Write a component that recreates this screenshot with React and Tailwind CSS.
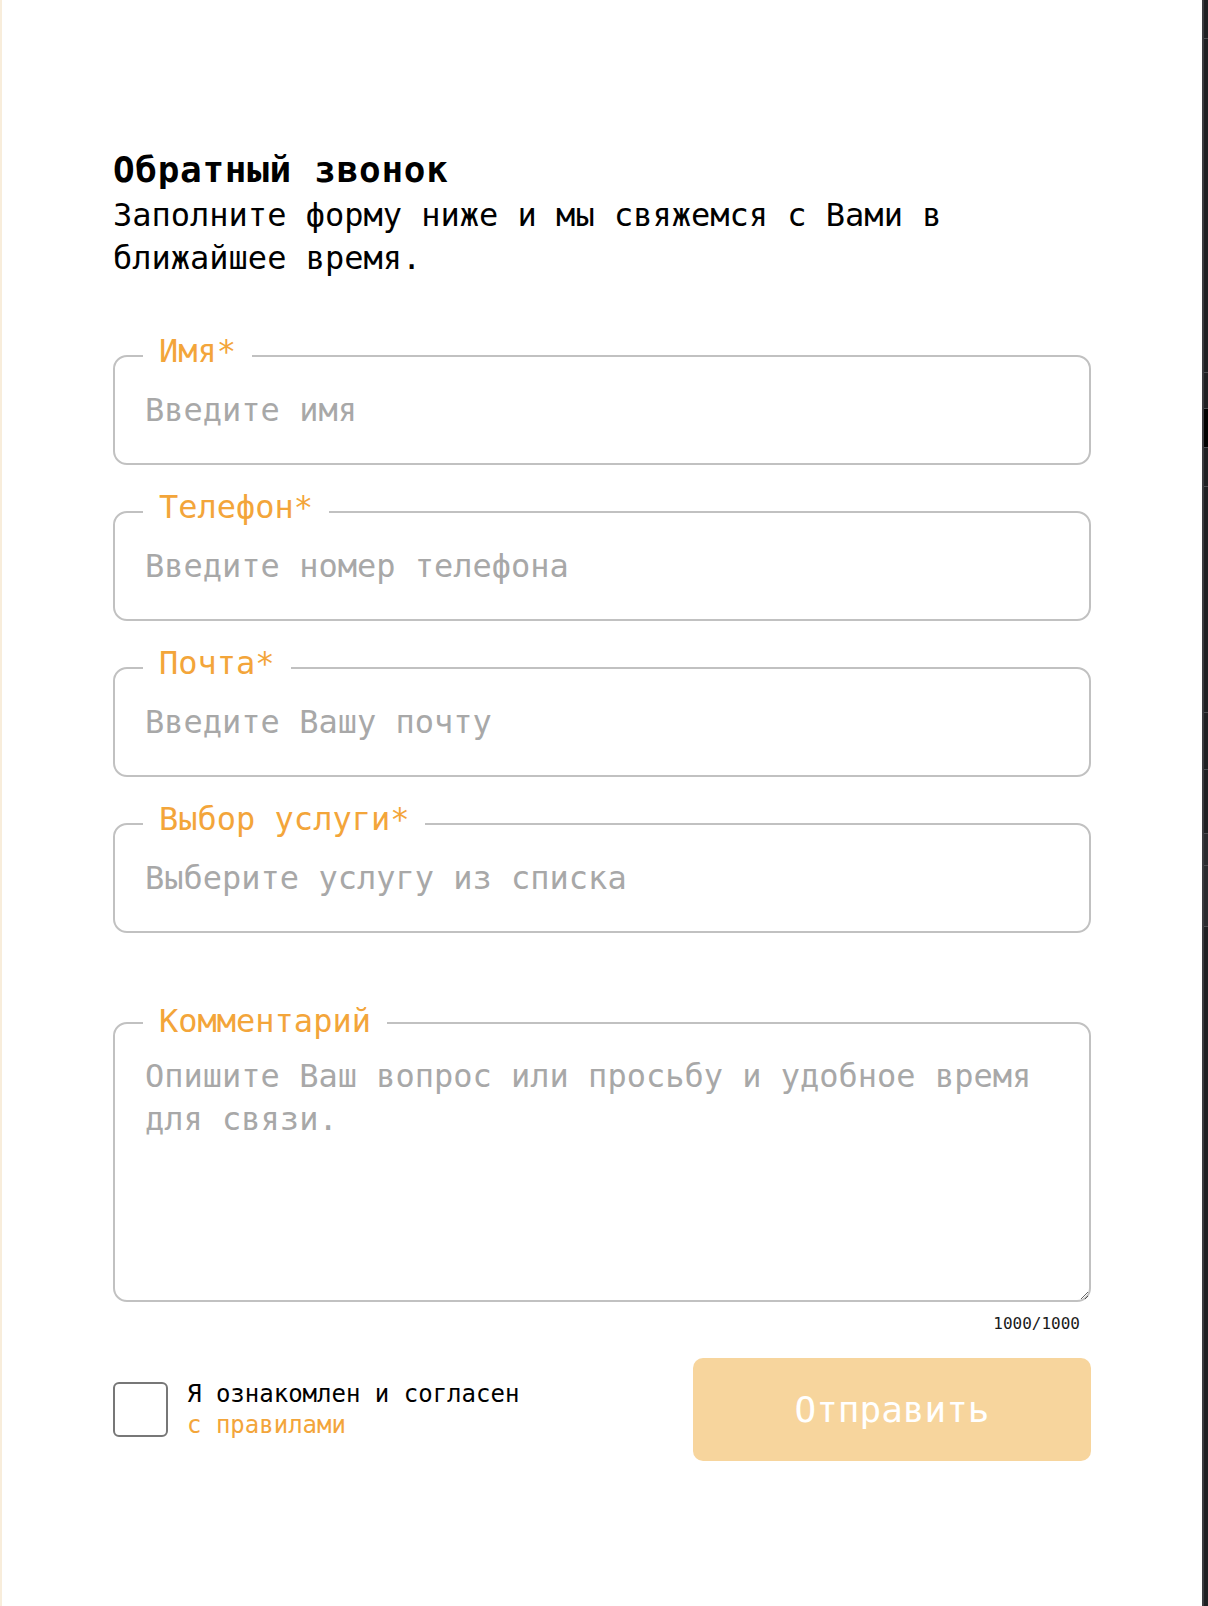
import React from "react";

const fields = [
  { label: "Имя*", ph: "Введите имя" },
  { label: "Телефон*", ph: "Введите номер телефона" },
  { label: "Почта*", ph: "Введите Вашу почту" },
  { label: "Выбор услуги*", ph: "Выберите услугу из списка" },
];

function RightStrip() {
  return (
    <div className="flex w-[6px] shrink-0 flex-col border-l-2 border-[#3b3c40] bg-[#1f2023]">
      <div className="h-[39px] border-b border-[#4a4b50]" />
      <div className="h-[334px] border-b border-[#4a4b50]" />
      <div className="h-[36px] border-b border-[#4a4b50]" />
      <div className="h-[38px] bg-black" />
      <div className="h-[40px] border-y border-[#4a4b50]" />
      <div className="h-[226px] border-b border-[#4a4b50]" />
      <div className="h-[57px] border-b border-[#4a4b50]" />
      <div className="h-[64px] border-b border-[#4a4b50]" />
      <div className="h-[32px] border-b border-[#4a4b50] bg-[#2a2b2f]" />
      <div className="h-[61px] border-b border-[#4a4b50] bg-[#2a2b2f]" />
      <div className="flex-1" />
    </div>
  );
}

export default function App() {
  return (
    <div className="flex min-h-[1606px] w-[1208px] bg-white font-['DejaVu_Sans_Mono',monospace]">
      <div className="w-[2px] shrink-0 bg-[#f8eddb]" />
      <main className="w-[1200px] shrink-0 bg-white px-[111px] pt-[148px]">
        <h1 className="text-[36px] font-bold leading-[44px] tracking-[0.7px] text-black">
          Обратный звонок
        </h1>
        <p className="mt-[2px] text-[32px] leading-[43px] text-black">
          Заполните форму ниже и мы свяжемся с Вами в ближайшее время.
        </p>

        <form className="mt-[75px] flex flex-col gap-[46px]">
          {fields.map((f) => (
            <div key={f.label} className="relative">
              <input
                type="text"
                placeholder={f.ph}
                className="block h-[110px] w-full rounded-[14px] border-2 border-[#c1c1c1] bg-white px-[30px] text-[32px] text-black outline-none placeholder:text-[#a8a8a8]"
              />
              <span className="absolute -top-5 left-[30px] bg-white px-4 text-[32px] leading-8 text-[#f3a53a]">
                {f.label}
              </span>
            </div>
          ))}

          <div className="relative mt-[43px]">
            <textarea
              placeholder="Опишите Ваш вопрос или просьбу и удобное время для связи."
              className="block h-[280px] w-full rounded-[14px] border-2 border-[#c1c1c1] bg-white px-[30px] pt-[31px] text-[32px] leading-[43px] text-black outline-none placeholder:text-[#a8a8a8]"
            />
            <span className="absolute -top-[17px] left-[30px] bg-white px-4 text-[32px] leading-8 text-[#f3a53a]">
              Комментарий
            </span>
            <div className="mt-3 pr-[11px] text-right text-[16px] leading-5 text-[#1a1a1a]">
              1000/1000
            </div>
          </div>
        </form>

        <div className="mt-[24px] flex items-center justify-between">
          <label className="flex items-center gap-[19px]">
            <span className="block h-[55px] w-[55px] rounded-[6px] border-2 border-[#777777] bg-white" />
            <span className="text-[24px] leading-[31px] text-black">
              <span className="block">Я ознакомлен и согласен</span>
              <span className="block text-[#f3a53a]">с правилами</span>
            </span>
          </label>
          <button
            type="button"
            className="flex h-[103px] w-[398px] items-center justify-center rounded-[10px] bg-[#f7d59d] text-[36px] text-white"
          >
            Отправить
          </button>
        </div>
      </main>
      <RightStrip />
    </div>
  );
}
